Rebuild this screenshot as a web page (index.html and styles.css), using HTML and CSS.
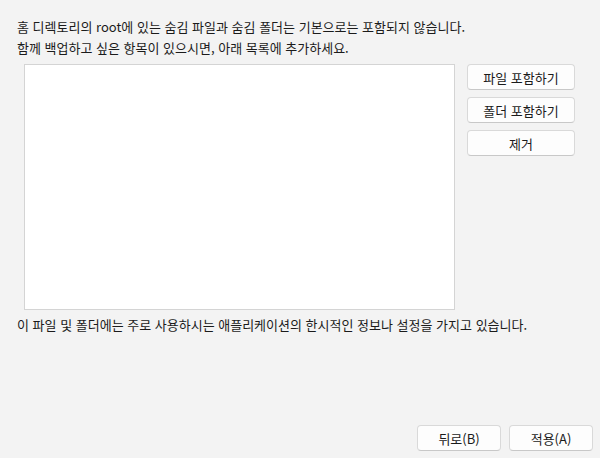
FILE: index.html
```html
<!DOCTYPE html>
<html lang="ko">
<head>
    <meta charset="UTF-8">
    <title>숨김 항목 포함</title>
    <link rel="stylesheet" href="styles.css">
</head>
<body>
    <div class="window">
        <div class="content">
            <p class="line">홈 디렉토리의 root에 있는 숨김 파일과 숨김 폴더는 기본으로는 포함되지 않습니다.</p>
            <p class="line">함께 백업하고 싶은 항목이 있으시면, 아래 목록에 추가하세요.</p>
            <div class="list-row">
                <div class="item-list"></div>
                <div class="side-buttons">
                    <button class="btn side-btn">파일 포함하기</button>
                    <button class="btn side-btn">폴더 포함하기</button>
                    <button class="btn side-btn">제거</button>
                </div>
            </div>
            <p class="line note">이 파일 및 폴더에는 주로 사용하시는 애플리케이션의 한시적인 정보나 설정을 가지고 있습니다.</p>
        </div>
        <div class="footer">
            <button class="btn footer-btn">뒤로(B)</button>
            <button class="btn footer-btn">적용(A)</button>
        </div>
    </div>
</body>
</html>
```

FILE: styles.css
```css
html, body {
    margin: 0;
    height: 100%;
}
body {
    font-family: "Noto Sans CJK KR", "Noto Sans", sans-serif;
    font-size: 13px;
    color: #1b1b1b;
    background-color: #f3f3f3;
}
.window {
    height: 100%;
    display: flex;
    flex-direction: column;
    box-sizing: border-box;
}
.content {
    flex: 1;
    padding: 16px 0 0 17px;
}
.line {
    margin: 0;
    line-height: 21px;
}
.list-row {
    display: flex;
    gap: 12px;
    margin: 6px 0 4px 7px;
}
.item-list {
    width: 431px;
    height: 246px;
    background-color: #fff;
    border: 1px solid #d4d4d4;
    box-sizing: border-box;
}
.side-buttons {
    display: flex;
    flex-direction: column;
    gap: 7px;
}
.btn {
    font-family: inherit;
    font-size: 13px;
    color: #1b1b1b;
    background-color: #fdfdfd;
    border: 1px solid #d9d9d9;
    border-bottom-color: #c8c8c8;
    border-radius: 4px;
    height: 26px;
    padding: 0;
    box-sizing: border-box;
    cursor: pointer;
}
.side-btn {
    width: 108px;
}
.footer {
    display: flex;
    justify-content: flex-end;
    gap: 8px;
    padding: 0 7px 7px 0;
}
.footer-btn {
    width: 84px;
}
```
